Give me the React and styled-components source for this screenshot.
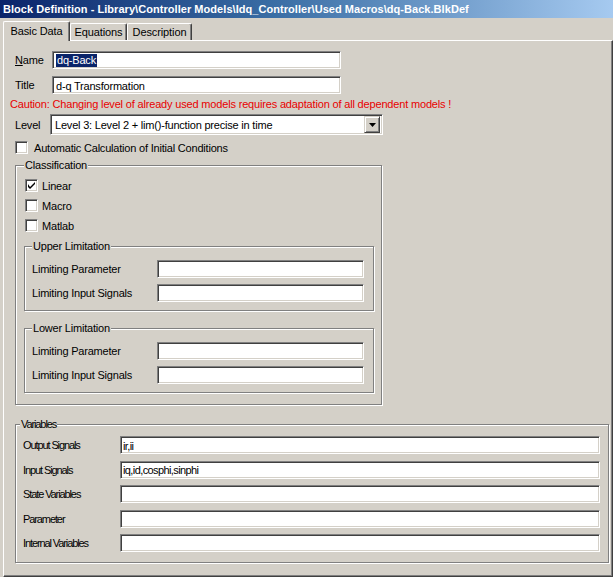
import React from 'react'
import styled, { createGlobalStyle } from 'styled-components'

const GlobalStyle = createGlobalStyle`
  html, body {
    margin: 0;
    padding: 0;
    background: #d4d0c8;
  }
  body {
    font-family: "Liberation Sans", Arial, sans-serif;
    font-size: 11px;
    color: #000;
  }
`

const Window = styled.div`
  width: 613px;
  height: 577px;
  overflow: hidden;
  background: #d4d0c8;
  display: flex;
  flex-direction: column;
`

const TitleBar = styled.div`
  height: 18px;
  flex-shrink: 0;
  display: flex;
  align-items: center;
  padding-left: 3px;
  background: linear-gradient(to right, #0a246a 0%, #3a6ea5 45%, #a6caf0 100%);
`

const TitleText = styled.div`
  color: #fff;
  font-weight: bold;
  font-size: 11px;
  letter-spacing: 0.05px;
  white-space: nowrap;
`

const TabStrip = styled.div`
  display: flex;
  align-items: flex-end;
  height: 19px;
  margin-top: 3px;
  padding-left: 3px;
  flex-shrink: 0;
`

const Tab = styled.div`
  position: relative;
  z-index: ${p => (p.$active ? 2 : 1)};
  box-sizing: border-box;
  height: ${p => (p.$active ? '20px' : '17px')};
  margin-bottom: ${p => (p.$active ? '-1px' : '0')};
  width: ${p => p.$w}px;
  background: #d4d0c8;
  border-top: 1px solid #fff;
  border-left: 1px solid #fff;
  border-right: 1px solid #404040;
  box-shadow: inset -1px 0 0 #808080;
  border-top-left-radius: 2px;
  border-top-right-radius: 2px;
  display: flex;
  align-items: ${p => (p.$active ? 'flex-start' : 'center')};
  padding-top: ${p => (p.$active ? '3px' : '0')};
  justify-content: center;
  letter-spacing: -0.1px;
  white-space: nowrap;
`

const Panel = styled.div`
  box-sizing: border-box;
  width: 610px;
  height: 538px;
  margin-left: 3px;
  border-top: 1px solid #fff;
  border-left: 1px solid #fff;
  border-right: 1px solid #404040;
  border-bottom: 1px solid #404040;
  box-shadow: inset -1px -1px 0 #808080;
  padding: 10px 0 0 11px;
  display: flex;
  flex-direction: column;
  align-items: flex-start;
`

const FieldRow = styled.div`
  display: flex;
  align-items: center;
  margin-top: ${p => p.$mt || 0}px;
`

const Label = styled.div`
  width: ${p => p.$w}px;
  flex-shrink: 0;
  white-space: nowrap;
  letter-spacing: ${p => (p.$narrow ? '-1.1px' : '-0.2px')};
`

const TextBox = styled.div`
  box-sizing: border-box;
  width: ${p => p.$w}px;
  height: 18px;
  background: #fff;
  border: 1px solid;
  border-color: #808080 #fff #fff #808080;
  box-shadow: inset 1px 1px 0 #404040, inset -1px -1px 0 #d4d0c8;
  padding: 1px 0 0 ${p => (p.$narrow ? 2 : 3)}px;
  display: flex;
  align-items: center;
  white-space: nowrap;
  letter-spacing: ${p => (p.$narrow ? '-0.6px' : '-0.2px')};
`

const Selected = styled.span`
  background: #0a246a;
  color: #fff;
  padding: 0 1px;
  line-height: 13px;
`

const Caution = styled.div`
  margin: 4px 0 0 -5px;
  line-height: 13px;
  color: #e80000;
  letter-spacing: -0.17px;
  white-space: nowrap;
`

const Combo = styled(TextBox)`
  height: 21px;
  padding: 0 2px 0 4px;
  justify-content: space-between;
`

const ComboButton = styled.div`
  box-sizing: border-box;
  width: 16px;
  height: 17px;
  background: #d4d0c8;
  border: 1px solid;
  border-color: #d4d0c8 #404040 #404040 #d4d0c8;
  box-shadow: inset 1px 1px 0 #fff, inset -1px -1px 0 #808080;
  display: flex;
  align-items: center;
  justify-content: center;
`

const CheckRow = styled.div`
  display: flex;
  align-items: center;
  height: 13px;
  margin-top: ${p => p.$mt || 0}px;
  margin-left: ${p => p.$ml || 0}px;
`

const CheckBox = styled.div`
  box-sizing: border-box;
  width: 13px;
  height: 13px;
  flex-shrink: 0;
  background: #fff;
  border: 1px solid;
  border-color: #808080 #fff #fff #808080;
  box-shadow: inset 1px 1px 0 #404040, inset -1px -1px 0 #d4d0c8;
  display: flex;
  align-items: center;
  justify-content: center;
`

const CheckLabel = styled.div`
  margin-left: ${p => p.$gap}px;
  letter-spacing: -0.2px;
  white-space: nowrap;
`

const GroupBox = styled.div`
  position: relative;
  box-sizing: border-box;
  width: ${p => p.$w}px;
  height: ${p => p.$h}px;
  margin-top: ${p => p.$mt || 0}px;
  margin-left: ${p => p.$ml || 0}px;
  border: 1px solid #808080;
  box-shadow: inset 1px 1px 0 #fff, 1px 1px 0 #fff;
  padding: ${p => p.$pad};
  display: flex;
  flex-direction: column;
  gap: ${p => p.$gap || 0}px;
`

const GroupLegend = styled.div`
  position: absolute;
  top: -7px;
  left: ${p => p.$x}px;
  padding: 0 1px;
  line-height: 13px;
  background: #d4d0c8;
  white-space: nowrap;
  letter-spacing: ${p => (p.$narrow ? '-1.1px' : '-0.2px')};
`

const Check = () => (
  <svg width="7" height="7" viewBox="0 0 7 7">
    <path d="M0 2 L0 5 L2 7 L7 2 L7 0 L2 5 Z" fill="#000" />
  </svg>
)

const Arrow = () => (
  <svg width="7" height="4" viewBox="0 0 7 4">
    <path d="M0 0 H7 L3.5 4 Z" fill="#000" />
  </svg>
)

const LimitGroup = ({ title, mt }) => (
  <GroupBox $w={350} $h={65} $mt={mt} $ml={-1} $pad="13px 0 0 7px" $gap={6}>
    <GroupLegend $x={7}>{title}</GroupLegend>
    <FieldRow>
      <Label $w={125}>Limiting Parameter</Label>
      <TextBox $w={207} />
    </FieldRow>
    <FieldRow>
      <Label $w={125}>Limiting Input Signals</Label>
      <TextBox $w={207} />
    </FieldRow>
  </GroupBox>
)

const variables = [
  ['Output Signals', 'ir,ii'],
  ['Input Signals', 'iq,id,cosphi,sinphi'],
  ['State Variables', ''],
  ['Parameter', ''],
  ['Internal Variables', '']
]

export default function App() {
  return (
    <Window>
      <GlobalStyle />
      <TitleBar>
        <TitleText>Block Definition - Library\Controller Models\Idq_Controller\Used Macros\dq-Back.BlkDef</TitleText>
      </TitleBar>
      <TabStrip>
        <Tab $active $w={67}>Basic Data</Tab>
        <Tab $w={57}>Equations</Tab>
        <Tab $w={65}>Description</Tab>
      </TabStrip>
      <Panel>
        <FieldRow>
          <Label $w={37}><u>N</u>ame</Label>
          <TextBox $w={289}><Selected>dq-Back</Selected></TextBox>
        </FieldRow>
        <FieldRow $mt={7}>
          <Label $w={37}>Title</Label>
          <TextBox $w={289}>d-q Transformation</TextBox>
        </FieldRow>
        <Caution>Caution: Changing level of already used models requires adaptation of all dependent models !</Caution>
        <FieldRow $mt={3}>
          <Label $w={35}>Level</Label>
          <Combo $w={333}>
            <span>Level 3: Level 2 + lim()-function precise in time</span>
            <ComboButton><Arrow /></ComboButton>
          </Combo>
        </FieldRow>
        <CheckRow $mt={6}>
          <CheckBox />
          <CheckLabel $gap={6}>Automatic Calculation of Initial Conditions</CheckLabel>
        </CheckRow>

        <GroupBox $w={367} $h={240} $mt={11} $pad="13px 0 0 9px">
          <GroupLegend $x={8}>Classification</GroupLegend>
          <CheckRow>
            <CheckBox><Check /></CheckBox>
            <CheckLabel $gap={4}>Linear</CheckLabel>
          </CheckRow>
          <CheckRow $mt={7}>
            <CheckBox />
            <CheckLabel $gap={4}>Macro</CheckLabel>
          </CheckRow>
          <CheckRow $mt={7}>
            <CheckBox />
            <CheckLabel $gap={4}>Matlab</CheckLabel>
          </CheckRow>
          <LimitGroup title="Upper Limitation" mt={14} />
          <LimitGroup title="Lower Limitation" mt={17} />
        </GroupBox>

        <GroupBox $w={594} $h={139} $mt={19} $pad="11px 0 0 7px" $gap={6.5}>
          <GroupLegend $x={4} $narrow>Variables</GroupLegend>
          {variables.map(([name, value]) => (
            <FieldRow key={name}>
              <Label $w={97} $narrow>{name}</Label>
              <TextBox $w={480} $narrow>{value}</TextBox>
            </FieldRow>
          ))}
        </GroupBox>
      </Panel>
    </Window>
  )
}
